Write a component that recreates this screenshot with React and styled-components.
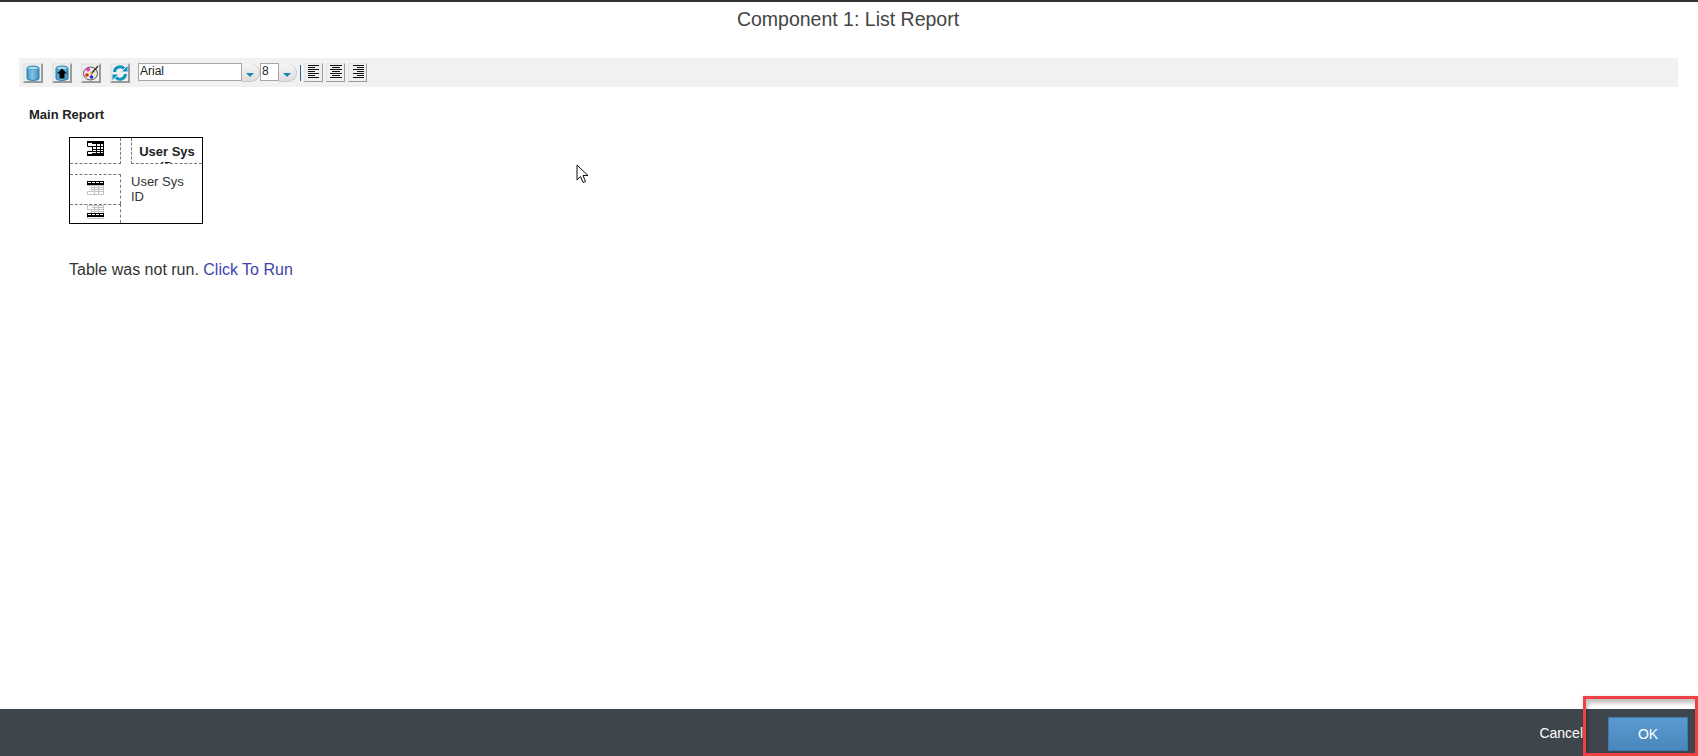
import React from "react";
import styled, { createGlobalStyle } from "styled-components";

const GlobalStyle = createGlobalStyle`
  html, body {
    margin: 0;
    padding: 0;
    background: #fff;
    font-family: "Liberation Sans", Arial, sans-serif;
  }
`;

function ToolIcon({ children }) {
  return (
    <ToolButton>
      <svg width="16" height="16" viewBox="0 0 16 16">
        {children}
      </svg>
    </ToolButton>
  );
}

function AlignIcon({ lines }) {
  return (
    <AlignButton>
      <svg width="14" height="15" viewBox="0 0 14 15">
        {lines.map(([x, w], i) => (
          <rect key={i} x={x} y={i * 2} width={w} height="1" fill="#111" />
        ))}
      </svg>
    </AlignButton>
  );
}

function Arrow() {
  return (
    <svg width="8" height="4" viewBox="0 0 8 4">
      <path d="M0 0h8L4 4z" fill="#1a86b5" />
    </svg>
  );
}

function CornerGlyph() {
  return (
    <svg width="17" height="15" viewBox="0 0 17 15">
      <g fill="none" stroke="#000" strokeWidth="1">
        <path d="M.5 .5h16v14H.5v-4h5V5.500H.5z" />
        <path d="M5 2.500h12M5 5.500h12M5 8.500h12M5 10.500h12M5 12.500h12M9.500 1v13M13.500 1v13" />
      </g>
      <rect x="0" y="0" width="17" height="2" fill="#000" />
      <rect x="0" y="13" width="17" height="2" fill="#000" />
    </svg>
  );
}

// gray table with one dark band, the band sits at the row it stands for
function RowGlyph({ bandY }) {
  return (
    <svg width="17" height="14" viewBox="0 0 17 14">
      <g fill="none" stroke="#c2c2c2" strokeWidth="1">
        <path d="M.5 .5h16v13H.5v-3h4v-6h-4z" />
        <path d="M5 2.500h12M5 4.500h12M5 6.500h12M5 8.500h12M5 10.500h12M7.500 1v12M11.500 1v12" />
      </g>
      <rect x="0" y={bandY} width="17" height="4" fill="#000" />
      <path d={`M1 ${bandY + 1.5}h15`} stroke="#fff" strokeDasharray="3 1" />
    </svg>
  );
}

export default function App() {
  return (
    <Page>
      <GlobalStyle />
      <Title>Component 1: List Report</Title>
      <Toolbar>
        <ToolIcon>
          <defs>
            <linearGradient id="can" x1="0" x2="1" y1="0" y2="0">
              <stop offset="0" stopColor="#3f95c6" />
              <stop offset="0.45" stopColor="#86c0e2" />
              <stop offset="1" stopColor="#3f8fc0" />
            </linearGradient>
          </defs>
          <path d="M2 3C2 .5 14 .5 14 3v10.500C14 16 2 16 2 13.500z" fill="url(#can)" stroke="#1f7fb0" />
          <ellipse cx="8" cy="3" rx="5.500" ry="1.600" fill="#b5dcf0" stroke="#2c8cbc" strokeWidth=".6" />
        </ToolIcon>
        <ToolIcon>
          <path d="M2 3C2 .5 14 .5 14 3v10.500C14 16 2 16 2 13.500z" fill="url(#can)" stroke="#1f7fb0" />
          <ellipse cx="8" cy="3" rx="5.500" ry="1.600" fill="#b5dcf0" stroke="#2c8cbc" strokeWidth=".6" />
          <path d="M8 3.500l5 5H10.500v5h-5v-5H3z" fill="#000" />
        </ToolIcon>
        <ToolIcon>
          <ellipse cx="7.500" cy="8.500" rx="7" ry="6.500" fill="#efe9d6" stroke="#555" />
          <circle cx="5" cy="4.500" r="2" fill="#e83ad0" />
          <circle cx="4" cy="10" r="1.800" fill="#e02020" />
          <circle cx="8.500" cy="12" r="1.800" fill="#1530d8" />
          <path d="M15 1L8 9" stroke="#333" strokeWidth="1.500" />
          <circle cx="8.500" cy="8.500" r="1.200" fill="#caa23c" />
        </ToolIcon>
        <ToolIcon>
          <path d="M2.500 7A5.500 5.500 0 0 1 12 3.500" fill="none" stroke="#0d93bd" strokeWidth="3" />
          <path d="M13.500 9A5.500 5.500 0 0 1 4 12.500" fill="none" stroke="#0d93bd" strokeWidth="3" />
          <path d="M10 6.500h5.500V1zM6 9.500H.5V15z" fill="#0d93bd" />
        </ToolIcon>
        <FontField>Arial</FontField>
        <ComboArrow>
          <Arrow />
        </ComboArrow>
        <SizeField>8</SizeField>
        <ComboArrow>
          <Arrow />
        </ComboArrow>
        <Divider />
        <AlignIcon lines={[[1, 11], [1, 7], [1, 11], [1, 7], [1, 11], [1, 7], [1, 11]]} />
        <AlignIcon lines={[[1, 12], [3, 8], [1, 12], [3, 8], [1, 12], [3, 8], [1, 12]]} />
        <AlignIcon lines={[[2, 11], [6, 7], [2, 11], [6, 7], [2, 11], [6, 7], [2, 11]]} />
      </Toolbar>

      <SectionLabel>Main Report</SectionLabel>

      <Diagram>
        <CornerCell>
          <CornerGlyph />
        </CornerCell>
        <HeaderCell>
          <HeaderText>User Sys ID</HeaderText>
        </HeaderCell>
        <LeftColumn>
          <GroupCell $top>
            <RowGlyph bandY={0} />
          </GroupCell>
          <GroupCell>
            <RowGlyph bandY={8} />
          </GroupCell>
        </LeftColumn>
        <BodyCell>User Sys ID</BodyCell>
      </Diagram>

      <Message>
        Table was not run. <RunLink>Click To Run</RunLink>
      </Message>

      <Spacer />

      <Footer>
        <CancelButton>Cancel</CancelButton>
        <OkButton>OK</OkButton>
      </Footer>

      <Cursor width="13" height="20" viewBox="0 0 13 20">
        <path d="M1 1v15l3.500-3.500 2.500 6 2.500-1-2.500-6H12z" fill="#fff" stroke="#111" strokeWidth="1" />
      </Cursor>
      <Highlight />
    </Page>
  );
}

const Page = styled.div`
  position: relative;
  display: flex;
  flex-direction: column;
  height: 100vh;
  box-sizing: border-box;
  border-top: 2px solid #333;
  overflow: hidden;
  background: #fff;
`;

const Title = styled.h1`
  margin: 0;
  height: 56px;
  padding: 5px 2px 0 0;
  box-sizing: border-box;
  text-align: center;
  font-size: 19.5px;
  line-height: 24px;
  font-weight: 400;
  color: #444;
`;

const Toolbar = styled.div`
  display: flex;
  align-items: center;
  height: 29px;
  margin: 0 20px 0 19px;
  padding-left: 4px;
  background: #f1f1f1;
`;

const ToolButton = styled.div`
  display: flex;
  align-items: center;
  justify-content: center;
  width: 20px;
  height: 20px;
  margin-right: 9px;
  box-sizing: border-box;
  background: #efefef;
  border: 2px solid;
  border-color: #e6e6e6 #9a9a9a #9a9a9a #e6e6e6;
`;

const Field = styled.div`
  height: 18px;
  margin-top: -1px;
  box-sizing: border-box;
  background: #fff;
  border: 1px solid #a5a5a5;
  font-size: 12px;
  line-height: 14px;
  padding-left: 1px;
  color: #222;
`;

const FontField = styled(Field)`
  width: 104px;
  margin-left: -1px;
`;

const SizeField = styled(Field)`
  width: 19px;
`;

const ComboArrow = styled.div`
  display: flex;
  align-items: center;
  justify-content: center;
  width: 18px;
  height: 18px;
  padding: 5px 2px 0 0;
  box-sizing: border-box;
  background: linear-gradient(#f6f6f6, #dedede);
  border-radius: 0 9px 9px 0;
  border-right: 1px solid #c8c8c8;
  border-bottom: 1px solid #c8c8c8;
`;

const Divider = styled.div`
  width: 1px;
  height: 16px;
  margin: 0 3px 0 3px;
  background: #1c6f8f;
`;

const AlignButton = styled.div`
  display: flex;
  align-items: center;
  justify-content: center;
  width: 19px;
  height: 19px;
  margin-right: 3px;
  box-sizing: border-box;
  background: #efefef;
  border: 1px solid;
  border-color: #e6e6e6 #9a9a9a #9a9a9a #e6e6e6;
`;

const SectionLabel = styled.div`
  margin: 20px 0 0 29px;
  font-size: 13px;
  line-height: 16px;
  font-weight: 700;
  color: #222;
`;

const Diagram = styled.div`
  display: grid;
  grid-template-columns: 51px 1fr;
  grid-template-rows: 26px 59px;
  width: 134px;
  height: 87px;
  margin: 14px 0 0 69px;
  box-sizing: border-box;
  border: 1px solid #000;
`;

const CornerCell = styled.div`
  display: flex;
  justify-content: center;
  align-items: flex-start;
  padding-top: 3px;
  box-sizing: border-box;
  border-right: 1px dashed #777;
  border-bottom: 1px dashed #777;
`;

const HeaderCell = styled.div`
  margin-left: 10px;
  overflow: hidden;
  box-sizing: border-box;
  border-left: 1px dashed #777;
  border-bottom: 1px dashed #777;
`;

const HeaderText = styled.div`
  padding: 6px 4px 0;
  text-align: center;
  font-size: 13px;
  line-height: 15px;
  font-weight: 700;
  color: #222;
`;

const LeftColumn = styled.div`
  display: flex;
  flex-direction: column;
  padding-top: 10px;
`;

const GroupCell = styled.div`
  display: flex;
  flex: ${(p) => (p.$top ? "0 0 30px" : "1")};
  justify-content: center;
  align-items: flex-start;
  padding-top: ${(p) => (p.$top ? "6px" : "0")};
  box-sizing: border-box;
  border-right: 1px dashed #777;
  border-top: 1px dashed #777;
`;

const BodyCell = styled.div`
  padding: 10px 10px 0;
  font-size: 13px;
  line-height: 15px;
  color: #333;
`;

const Message = styled.div`
  margin: 36px 0 0 69px;
  font-size: 16px;
  line-height: 20px;
  color: #333;
`;

const RunLink = styled.a`
  color: #4242ad;
  cursor: pointer;
`;

const Spacer = styled.div`
  flex: 1;
`;

const Footer = styled.div`
  display: flex;
  align-items: center;
  justify-content: flex-end;
  height: 47px;
  padding: 0 10px 0 0;
  background: #3e454c;
`;

const CancelButton = styled.span`
  margin-right: 25px;
  font-size: 14px;
  color: #fff;
`;

const OkButton = styled.button`
  width: 80px;
  height: 34px;
  margin-top: 3px;
  border: 1px solid #3b7cb4;
  background: linear-gradient(#5a9ad0, #4a88bd);
  color: #fff;
  font-family: inherit;
  font-size: 14px;
  font-weight: 400;
`;

const Cursor = styled.svg`
  position: absolute;
  left: 576px;
  top: 162px;
`;

const Highlight = styled.div`
  position: absolute;
  left: 1583px;
  top: 694px;
  width: 115px;
  height: 60px;
  box-sizing: border-box;
  border: 3px solid #f04045;
  box-shadow: inset 2px 4px 4px rgba(0, 0, 0, 0.25), 0 0 3px rgba(0, 0, 0, 0.15);
`;
